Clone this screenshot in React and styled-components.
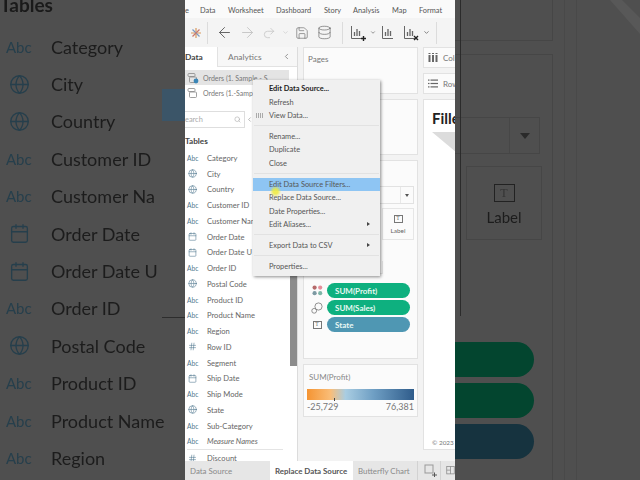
import React from 'react';
import styled, { createGlobalStyle } from 'styled-components';
import { ArrowLeft, ArrowRight, Search, ChevronLeft, Globe, Calendar, Hash, Database, Redo2, Save, ChevronDown } from 'lucide-react';

const GlobalStyle = createGlobalStyle`
  html, body { margin: 0; padding: 0; background: #4f4f4f; }
  * { box-sizing: border-box; }
`;

const Page = styled.div`
  position: relative;
  display: flex;
  width: 640px;
  height: 480px;
  overflow: hidden;
  font-family: "Lato", "Liberation Sans", sans-serif;
  color: #555;
`;

/* dimmed zoomed copy either side of the video */
const LeftBackdrop = styled.aside`
  position: relative;
  width: 185px;
  flex: none;
  background: #4f4f4f;
  filter: blur(0.4px);
`;

const BackdropTitle = styled.div`
  height: 28px;
  font-size: 19px;
  line-height: 10px;
  font-weight: 700;
  color: #1a1a1a;
`;

const BackdropRow = styled.div`
  display: flex;
  align-items: center;
  height: 37.4px;
  font-size: 18px;
  color: #1c1c1c;
  white-space: nowrap;
`;

const BackdropIcon = styled.span`
  display: flex;
  width: 51px;
  flex: none;
  padding-left: ${p => (p.$text ? '6px' : '9px')};
  font-size: 15px;
  color: #263f4c;
`;

const MenuGhost = styled.div`
  position: absolute;
  left: 162px;
  top: 89px;
  width: 23px;
  height: 32px;
  background: #3b5568;
`;

const MenuGhostLine = styled.div`
  position: absolute;
  left: 162px;
  top: 317px;
  width: 23px;
  height: 1px;
  background: #2d2d2d;
`;

const RightBackdrop = styled.aside`
  position: relative;
  display: flex;
  width: 185px;
  flex: none;
  background: #4f4f4f;
  filter: blur(0.4px);
`;

const GhostColumn = styled.div`
  display: flex;
  flex-direction: column;
  width: 98px;
  flex: none;
`;

const GhostCard = styled.div`
  height: ${p => p.$h}px;
  margin-bottom: ${p => p.$gap || 0}px;
  padding-top: ${p => p.$pad || 0}px;
  border-right: 1px solid #464646;
  border-bottom: ${p => (p.$open ? 0 : '1px solid #464646')};
  border-top: ${p => (p.$open ? '1px solid #464646' : 0)};
`;

const GhostSelect = styled.div`
  display: flex;
  justify-content: flex-end;
  width: 85px;
  height: 37px;
  border: 1px solid #464646;
  border-left: 0;
`;

const GhostArrow = styled.div`
  display: flex;
  align-items: center;
  justify-content: center;
  width: 30px;
  border-left: 1px solid #474747;
  &::after {
    content: '';
    border: 5px solid transparent;
    border-top: 6px solid #2a2a2a;
    border-bottom: 0;
  }
`;

const GhostTile = styled.div`
  display: flex;
  flex-direction: column;
  align-items: center;
  gap: 6px;
  width: 76px;
  height: 74px;
  margin: 12px 0 0 11px;
  padding-top: 17px;
  border: 1px solid #464646;
  font-size: 15px;
  color: #1c1c1c;
`;

const GhostT = styled.span`
  display: flex;
  align-items: center;
  justify-content: center;
  width: 21px;
  height: 18px;
  border: 1px solid #222;
  font-family: "Liberation Serif", serif;
  font-size: 12px;
  line-height: 1;
  color: #333;
`;

const GhostPills = styled.div`
  margin-top: 102px;
`;

const GhostPill = styled.div`
  width: 79px;
  height: 35px;
  margin-bottom: 6px;
  border-radius: 0 18px 18px 0;
  background: ${p => p.$color};
`;

const GhostGutter = styled.div`
  width: 12px;
  flex: none;
  border-right: 1px solid #494949;
`;

const GhostEdge = styled.div`
  position: absolute;
  left: 5px;
  top: 0;
  width: 1px;
  height: 316px;
  background: #2b2b2b;
`;

const GhostCorner = styled.svg`
  position: absolute;
  right: 0;
  top: 0;
`;

/* the video itself */
const Video = styled.main`
  display: flex;
  flex-direction: column;
  width: 270px;
  height: 480px;
  flex: none;
  overflow: hidden;
  background: #f3f3f3;
`;

const MenuBar = styled.nav`
  display: flex;
  align-items: center;
  height: 18px;
  flex: none;
  padding-top: 2px;
  background: #fafafa;
  font-size: 7.4px;
  color: #555;
`;

const MenuLabel = styled.span`
  width: ${p => p.$w}px;
  flex: none;
`;

const Toolbar = styled.div`
  display: flex;
  align-items: center;
  height: 29px;
  flex: none;
  background: #f4f4f4;
  color: #666;
`;

const ToolDivider = styled.span`
  width: 1px;
  height: 22px;
  flex: none;
  margin: ${p => p.$m || '0 8px'};
  background: #dcdcdc;
`;

const ToolSlot = styled.span`
  display: flex;
  align-items: center;
  justify-content: center;
  width: ${p => p.$w}px;
  flex: none;
  color: ${p => (p.$faint ? '#c4c4c4' : '#5a5a5a')};
`;

const Body = styled.div`
  display: flex;
  flex: 1;
  min-height: 0;
`;

const DataPane = styled.section`
  display: flex;
  flex-direction: column;
  width: 113px;
  flex: none;
  background: #fff;
  border-right: 1px solid #dcdcdc;
`;

const PaneTabs = styled.div`
  display: flex;
  height: 20px;
  flex: none;
  font-size: 8.4px;
`;

const DataTab = styled.span`
  width: 33px;
  padding-top: 5px;
  font-weight: 700;
  color: #444;
  border-right: 1px solid #e2e2e2;
`;

const AnalyticsTab = styled.span`
  display: flex;
  justify-content: space-between;
  flex: 1;
  padding: 5px 6px 0 10px;
  background: #f7f7f7;
  border-bottom: 1px solid #e2e2e2;
  color: #777;
`;

const Sources = styled.div`
  height: 44px;
  flex: none;
  padding-top: 3px;
`;

const SourceRow = styled.div`
  display: flex;
  align-items: center;
  gap: 4px;
  width: 104px;
  height: 15px;
  padding-left: 2px;
  background: ${p => (p.$active ? '#e4e4e4' : 'transparent')};
  font-size: 7px;
  color: #777;
  white-space: nowrap;
  overflow: hidden;
`;

const SearchRow = styled.div`
  display: flex;
  align-items: center;
  gap: 1px;
  height: 17px;
  flex: none;
  color: #888;
`;

const SearchBox = styled.div`
  display: flex;
  align-items: center;
  justify-content: space-between;
  width: 60px;
  height: 17px;
  padding-right: 3px;
  border: 1px solid #dedede;
  border-left: 0;
  font-size: 7.4px;
  color: #aaa;
`;

const TablesHead = styled.div`
  height: 22px;
  flex: none;
  padding-top: 8px;
  font-size: 8.2px;
  line-height: 10px;
  font-weight: 700;
  color: #444;
`;

const ListArea = styled.div`
  display: flex;
  flex: 1;
  min-height: 0;
  overflow: hidden;
`;

const FieldList = styled.div`
  flex: 1;
  min-width: 0;
`;

const FieldRow = styled.div`
  display: flex;
  align-items: center;
  height: 15.75px;
  font-size: 7.6px;
  font-style: ${p => (p.$italic ? 'italic' : 'normal')};
  color: #666;
  white-space: nowrap;
  overflow: hidden;
`;

const FieldIcon = styled.span`
  display: flex;
  justify-content: ${p => (p.$text ? 'flex-start' : 'center')};
  width: 22px;
  flex: none;
  padding: ${p => (p.$text ? '0 0 0 2px' : '0 8px 0 0')};
  font-size: 6.6px;
  font-style: normal;
  color: #50788e;
`;

const ListRule = styled.div`
  height: 1px;
  margin: 0 6px 0 2px;
  background: #e4e4e4;
`;

const ScrollTrack = styled.div`
  width: 8px;
  flex: none;
  padding-left: 1px;
`;

const ScrollThumb = styled.div`
  width: 7px;
  height: 216px;
  background: #8c8c8c;
`;

const CardsColumn = styled.section`
  display: flex;
  flex-direction: column;
  gap: 5px;
  width: 115px;
  flex: none;
  margin-left: 5px;
`;

const Card = styled.div`
  height: ${p => p.$h}px;
  flex: none;
  padding: ${p => p.$pad || '6px 4px'};
  background: #fbfbfb;
  border: 1px solid #e2e2e2;
  font-size: 8px;
  color: #777;
`;

const MarksSelect = styled.div`
  display: flex;
  justify-content: flex-end;
  height: 18px;
  margin: 25px 3px 0 0;
  border: 1px solid #e2e2e2;
`;

const MarksArrow = styled.span`
  display: flex;
  align-items: center;
  justify-content: center;
  width: 13px;
  border-left: 1px solid #e8e8e8;
  &::after {
    content: '';
    border: 2.5px solid transparent;
    border-top: 3px solid #555;
    border-bottom: 0;
  }
`;

const TileRow = styled.div`
  display: flex;
  justify-content: flex-end;
  margin: 4px 3px 0 0;
`;

const Tile = styled.div`
  display: flex;
  flex-direction: column;
  align-items: center;
  gap: 4px;
  width: 32px;
  height: 32px;
  padding-top: 6px;
  border: 1px solid #e6e6e6;
  font-size: 6.4px;
  color: #666;
`;

const TinyT = styled.span`
  display: flex;
  align-items: center;
  justify-content: center;
  width: 9px;
  height: 8px;
  border: 1px solid #777;
  font-family: "Liberation Serif", serif;
  font-size: 5.5px;
  line-height: 1;
  color: #666;
`;

const HiddenTiles = styled.div`
  display: flex;
  gap: 5px;
  height: 13px;
  margin: 21px 0 0 3px;
`;

const HiddenTile = styled.span`
  width: 34px;
  border: 1px solid #e6e6e6;
  border-top: 0;
`;

const Pills = styled.div`
  display: flex;
  flex-direction: column;
  gap: 2px;
  margin-top: 9px;
`;

const PillRow = styled.div`
  display: flex;
  align-items: center;
`;

const PillIcon = styled.span`
  display: flex;
  align-items: center;
  justify-content: center;
  width: 20px;
  flex: none;
`;

const Pill = styled.span`
  display: flex;
  align-items: center;
  width: 83px;
  height: 15px;
  padding-left: 8px;
  border-radius: 8px;
  background: ${p => p.$color};
  font-size: 8px;
  font-weight: 700;
  color: #e9f8f3;
`;

const LegendTitle = styled.div`
  padding: 4px 0 0 2px;
  font-size: 8px;
  color: #888;
`;

const LegendBar = styled.div`
  position: relative;
  height: 11px;
  margin-top: 7px;
  background: linear-gradient(90deg, #f59432 0%, #f9bd78 22%, #a9cde2 36%, #6f9fc4 62%, #2f5c8b 100%);
`;

const LegendTick = styled.span`
  position: absolute;
  left: 27px;
  bottom: -1px;
  width: 1px;
  height: 3px;
  background: #444;
`;

const LegendScale = styled.div`
  display: flex;
  justify-content: space-between;
  margin-top: 2px;
  font-size: 9px;
  line-height: 10px;
  color: #777;
`;

const ViewColumn = styled.section`
  display: flex;
  flex-direction: column;
  gap: 5px;
  flex: 1;
  min-width: 0;
  margin-left: 5px;
`;

const Shelf = styled.div`
  display: flex;
  align-items: center;
  gap: 5px;
  height: 21px;
  flex: none;
  padding-left: 4px;
  background: #fbfbfb;
  border: 1px solid #e2e2e2;
  border-right: 0;
  font-size: 8px;
  color: #777;
  white-space: nowrap;
  overflow: hidden;
  svg { flex: none; }
`;

const ViewCard = styled.div`
  display: flex;
  flex-direction: column;
  height: 351px;
  flex: none;
  padding: 8px 0 0 8px;
  background: #fff;
  border: 1px solid #e2e2e2;
  border-right: 0;
  overflow: hidden;
`;

const ViewTitle = styled.div`
  margin-bottom: 4px;
  font-size: 15px;
  line-height: 20px;
  font-weight: 700;
  color: #222;
  white-space: nowrap;
`;

const ViewFooter = styled.div`
  margin-top: auto;
  padding-bottom: 3px;
  font-size: 6.4px;
  color: #777;
  white-space: nowrap;
`;

const SheetTabs = styled.footer`
  display: flex;
  align-items: stretch;
  height: 19px;
  flex: none;
  background: #e6e6e6;
  font-size: 7.9px;
  color: #888;
`;

const SheetTab = styled.span`
  display: flex;
  align-items: center;
  width: ${p => p.$w}px;
  flex: none;
  padding-left: ${p => p.$pl || 5}px;
  border-right: ${p => (p.$rule ? '1px solid #d2d2d2' : 0)};
  background: ${p => (p.$active ? '#fff' : 'transparent')};
  font-weight: ${p => (p.$active ? 700 : 400)};
  color: ${p => (p.$active ? '#555' : '#8a8a8a')};
  white-space: nowrap;
  overflow: hidden;
`;

/* context menu over the panes */
const ContextMenu = styled.ul`
  position: absolute;
  left: 253px;
  top: 80px;
  width: 127px;
  height: 196px;
  margin: 0;
  padding: 2px 0 0;
  list-style: none;
  background: #f0f0f0;
  box-shadow: 1px 1px 3px rgba(0, 0, 0, 0.45);
  font-size: 7.4px;
  color: #555;
`;

const MenuItem = styled.li`
  position: relative;
  display: flex;
  align-items: center;
  justify-content: space-between;
  height: 13.4px;
  padding: 0 10px 0 16px;
  background: ${p => (p.$active ? '#8ec5f3' : 'transparent')};
  font-weight: ${p => (p.$bold ? 700 : 400)};
  color: ${p => (p.$bold ? '#222' : '#555')};
  &::after {
    content: ${p => (p.$sub ? "''" : 'none')};
    border: 2px solid transparent;
    border-left: 3px solid #444;
    border-right: 0;
  }
`;

const MenuGlyph = styled.svg`
  position: absolute;
  left: 3px;
  top: 3px;
`;

const MenuRule = styled.li`
  height: 1px;
  margin: ${p => p.$m || '3.3px'} 1px;
  background: #e2e2e2;
`;

const CursorGlow = styled.span`
  position: absolute;
  left: 270px;
  top: 186px;
  width: 11px;
  height: 11px;
  border-radius: 50%;
  background: radial-gradient(circle, rgba(240, 235, 60, 0.85) 30%, rgba(240, 235, 60, 0) 75%);
`;

const FIELDS = [
  ['abc', 'Category'], ['geo', 'City'], ['geo', 'Country'], ['abc', 'Customer ID'],
  ['abc', 'Customer Name'], ['date', 'Order Date'], ['date', 'Order Date U'], ['abc', 'Order ID'],
  ['geo', 'Postal Code'], ['abc', 'Product ID'], ['abc', 'Product Name'], ['abc', 'Region'],
  ['num', 'Row ID'], ['abc', 'Segment'], ['date', 'Ship Date'], ['abc', 'Ship Mode'],
  ['geo', 'State'], ['abc', 'Sub-Category'],
];

const BACKDROP_FIELDS = [
  ['abc', 'Category'], ['geo', 'City'], ['geo', 'Country'], ['abc', 'Customer ID'],
  ['abc', 'Customer Na'], ['date', 'Order Date'], ['date', 'Order Date U'], ['abc', 'Order ID'],
  ['geo', 'Postal Code'], ['abc', 'Product ID'], ['abc', 'Product Name'], ['abc', 'Region'],
];

const TypeGlyph = ({ type, size }) => {
  if (type === 'abc') return 'Abc';
  const Icon = { geo: Globe, date: Calendar, num: Hash }[type];
  return <Icon size={size} strokeWidth={1.5} />;
};

const TableauMark = () => (
  <svg width="12" height="12" viewBox="0 0 12 12" fill="none" strokeWidth="1.2">
    <path d="M6 1v10M1 6h10" stroke="#d99a5c" />
    <path d="M2.5 2.5l7 7" stroke="#7d9ac0" />
    <path d="M9.5 2.5l-7 7" stroke="#c9786e" />
  </svg>
);

const ChartIcon = ({ badge }) => (
  <svg width="18" height="18" viewBox="0 0 18 18" fill="none" stroke="#666" strokeWidth="1">
    <path d="M2.5 2v12.5H13" />
    <path d="M5.5 12V8M8 12V5M10.5 12V7" strokeWidth="1.3" />
    {badge === 'plus' && <path d="M12 14.5h5M14.5 12v5" stroke="#222" strokeWidth="1.4" />}
    {badge === 'x' && <path d="M12 12l4 4M16 12l-4 4" stroke="#222" strokeWidth="1.4" />}
  </svg>
);

const SourceIcon = ({ check }) => (
  <svg width="12" height="12" viewBox="0 0 12 12" fill="none" stroke="#888" strokeWidth="0.8">
    <rect x="1" y="1.5" width="7" height="3" rx="1" />
    <rect x="2.5" y="5" width="7" height="5.5" rx="1" />
    {check && <circle cx="9" cy="9" r="2.4" fill="#3a86b7" stroke="none" />}
  </svg>
);

const ColumnsGlyph = () => (
  <svg width="10" height="9" viewBox="0 0 10 9" fill="#666">
    <rect x="0.5" y="2" width="2" height="7" />
    <rect x="4" y="2" width="2" height="7" />
    <rect x="7.5" y="2" width="2" height="7" />
    <rect x="0.5" y="0" width="2" height="1" />
    <rect x="4" y="0" width="2" height="1" />
    <rect x="7.5" y="0" width="2" height="1" />
  </svg>
);

const RowsGlyph = () => (
  <svg width="10" height="9" viewBox="0 0 10 9" fill="#666">
    <rect x="0" y="0.5" width="1.5" height="1.2" />
    <rect x="2.5" y="0.5" width="7.5" height="1.2" />
    <rect x="0" y="3.9" width="1.5" height="1.2" />
    <rect x="2.5" y="3.9" width="7.5" height="1.2" />
    <rect x="0" y="7.3" width="1.5" height="1.2" />
    <rect x="2.5" y="7.3" width="7.5" height="1.2" />
  </svg>
);

const ColorDots = () => (
  <svg width="11" height="11" viewBox="0 0 11 11">
    <circle cx="2.6" cy="2.6" r="2.1" fill="#b56a6a" />
    <circle cx="8.2" cy="2.6" r="2.1" fill="#e58f9b" />
    <circle cx="2.6" cy="8.2" r="2.1" fill="#7d9aa3" />
    <circle cx="8.2" cy="8.2" r="2.1" fill="#7fb6a8" />
  </svg>
);

const SizeGlyph = () => (
  <svg width="12" height="12" viewBox="0 0 12 12" fill="none" stroke="#777" strokeWidth="0.8">
    <circle cx="7.5" cy="4.5" r="3.6" />
    <circle cx="3.2" cy="8.8" r="2.4" />
  </svg>
);

const GridAdd = () => (
  <svg width="13" height="13" viewBox="0 0 13 13" fill="none" stroke="#999" strokeWidth="1">
    <rect x="1" y="1" width="8" height="8" />
    <path d="M8 11h5M10.5 8.5v5" stroke="#555" />
  </svg>
);

const DashAdd = () => (
  <svg width="12" height="13" viewBox="0 0 12 13" fill="none" stroke="#888" strokeWidth="1">
    <rect x="1" y="1" width="10" height="10" />
    <path d="M6 1v10M1 6h5" />
  </svg>
);

const App = () => (
  <Page>
    <GlobalStyle />

    <LeftBackdrop>
      <BackdropTitle>Tables</BackdropTitle>
      {BACKDROP_FIELDS.map(([type, name]) => (
        <BackdropRow key={name}>
          <BackdropIcon $text={type === 'abc'}>
            <TypeGlyph type={type} size={21} />
          </BackdropIcon>
          {name}
        </BackdropRow>
      ))}
      <MenuGhost />
      <MenuGhostLine />
    </LeftBackdrop>

    <Video>
      <MenuBar>
        <MenuLabel $w={15}>e</MenuLabel>
        <MenuLabel $w={28}>Data</MenuLabel>
        <MenuLabel $w={48}>Worksheet</MenuLabel>
        <MenuLabel $w={48}>Dashboard</MenuLabel>
        <MenuLabel $w={29}>Story</MenuLabel>
        <MenuLabel $w={39}>Analysis</MenuLabel>
        <MenuLabel $w={27}>Map</MenuLabel>
        <MenuLabel $w={26}>Format</MenuLabel>
      </MenuBar>

      <Toolbar>
        <ToolSlot $w={22}><TableauMark /></ToolSlot>
        <ToolDivider $m="0 8px 0 0" />
        <ToolSlot $w={17}><ArrowLeft size={17} strokeWidth={1.3} /></ToolSlot>
        <ToolSlot $w={28} $faint><ArrowRight size={17} strokeWidth={1.3} /></ToolSlot>
        <ToolSlot $w={16} $faint><Redo2 size={14} strokeWidth={1.3} /></ToolSlot>
        <ToolSlot $w={16} $faint><ChevronDown size={7} strokeWidth={2} /></ToolSlot>
        <ToolSlot $w={18}><Save size={14} strokeWidth={1} /></ToolSlot>
        <ToolSlot $w={26}><Database size={15} strokeWidth={1} /></ToolSlot>
        <ToolDivider $m="0 3px 0 5px" />
        <ToolSlot $w={24}><ChartIcon badge="plus" /></ToolSlot>
        <ToolSlot $w={6}><ChevronDown size={7} strokeWidth={2.5} /></ToolSlot>
        <ToolSlot $w={25}><ChartIcon /></ToolSlot>
        <ToolSlot $w={19}><ChartIcon badge="x" /></ToolSlot>
        <ToolSlot $w={13}><ChevronDown size={7} strokeWidth={2.5} /></ToolSlot>
        <ToolDivider $m="0 0 0 3px" />
      </Toolbar>

      <Body>
        <DataPane>
          <PaneTabs>
            <DataTab>Data</DataTab>
            <AnalyticsTab>
              Analytics
              <ChevronLeft size={9} />
            </AnalyticsTab>
          </PaneTabs>
          <Sources>
            <SourceRow $active><SourceIcon check /> Orders (1. Sample - S</SourceRow>
            <SourceRow><SourceIcon /> Orders (1.-Sample - S</SourceRow>
          </Sources>
          <SearchRow>
            <SearchBox>
              earch
              <Search size={7} />
            </SearchBox>
            <ChevronLeft size={7} />
          </SearchRow>
          <TablesHead>Tables</TablesHead>
          <ListArea>
            <FieldList>
              {FIELDS.map(([type, name]) => (
                <FieldRow key={name}>
                  <FieldIcon $text={type === 'abc'}><TypeGlyph type={type} size={9} /></FieldIcon>
                  {name}
                </FieldRow>
              ))}
              <FieldRow $italic>
                <FieldIcon $text>Abc</FieldIcon>
                Measure Names
              </FieldRow>
              <ListRule />
              <FieldRow>
                <FieldIcon><TypeGlyph type="num" size={9} /></FieldIcon>
                Discount
              </FieldRow>
            </FieldList>
            <ScrollTrack>
              <ScrollThumb />
            </ScrollTrack>
          </ListArea>
        </DataPane>

        <CardsColumn>
          <Card $h={47}>Pages</Card>
          <Card $h={56} />
          <Card $h={199} $pad="0 0 0 3px">
            <MarksSelect><MarksArrow /></MarksSelect>
            <TileRow>
              <Tile>
                <TinyT>T</TinyT>
                Label
              </Tile>
            </TileRow>
            <HiddenTiles>
              <HiddenTile />
              <HiddenTile />
            </HiddenTiles>
            <Pills>
              <PillRow>
                <PillIcon><ColorDots /></PillIcon>
                <Pill $color="#0eb07f">SUM(Profit)</Pill>
              </PillRow>
              <PillRow>
                <PillIcon><SizeGlyph /></PillIcon>
                <Pill $color="#0eb07f">SUM(Sales)</Pill>
              </PillRow>
              <PillRow>
                <PillIcon><TinyT>T</TinyT></PillIcon>
                <Pill $color="#4f97b3">State</Pill>
              </PillRow>
            </Pills>
          </Card>
          <Card $h={53} $pad="3px 3px 0">
            <LegendTitle>SUM(Profit)</LegendTitle>
            <LegendBar><LegendTick /></LegendBar>
            <LegendScale>
              <span>-25,729</span>
              <span>76,381</span>
            </LegendScale>
          </Card>
        </CardsColumn>

        <ViewColumn>
          <Shelf><ColumnsGlyph /> Columns</Shelf>
          <Shelf><RowsGlyph /> Rows</Shelf>
          <ViewCard>
            <ViewTitle>Filled Map</ViewTitle>
            <svg width="24" height="20" viewBox="0 0 24 20">
              <path d="M0 0h24v20z" fill="#dcdcdc" />
            </svg>
            <ViewFooter>© 2023 Mapbox</ViewFooter>
          </ViewCard>
        </ViewColumn>
      </Body>

      <SheetTabs>
        <SheetTab $w={85}>Data Source</SheetTab>
        <SheetTab $w={83} $active>Replace Data Source</SheetTab>
        <SheetTab $w={65} $rule>Butterfly Chart</SheetTab>
        <SheetTab $w={23} $pl={6} $rule><GridAdd /></SheetTab>
        <SheetTab $w={14} $pl={5}><DashAdd /></SheetTab>
      </SheetTabs>
    </Video>

    <RightBackdrop>
      <GhostColumn>
        <GhostCard $h={41} $gap={13} />
        <GhostCard $open $h={426} $pad={62}>
          <GhostSelect><GhostArrow /></GhostSelect>
          <GhostTile>
            <GhostT>T</GhostT>
            Label
          </GhostTile>
          <GhostPills>
            <GhostPill $color="#03452f" />
            <GhostPill $color="#03452f" />
            <GhostPill $color="#16333f" />
          </GhostPills>
        </GhostCard>
      </GhostColumn>
      <GhostGutter />
      <GhostGutter />
      <GhostEdge />
      <GhostCorner width="30" height="34" viewBox="0 0 30 34">
        <path d="M0 0h12l18 18v16z" fill="#585858" />
      </GhostCorner>
    </RightBackdrop>

    <ContextMenu>
      <MenuItem $bold>Edit Data Source...</MenuItem>
      <MenuItem>Refresh</MenuItem>
      <MenuItem>
        <MenuGlyph width="7" height="7" viewBox="0 0 7 7" fill="#aaa">
          <rect x="0" y="1" width="1" height="5" />
          <rect x="2" y="1" width="1" height="5" />
          <rect x="4" y="1" width="1" height="5" />
          <rect x="6" y="1" width="1" height="5" />
        </MenuGlyph>
        View Data...
      </MenuItem>
      <MenuRule />
      <MenuItem>Rename...</MenuItem>
      <MenuItem>Duplicate</MenuItem>
      <MenuItem>Close</MenuItem>
      <MenuRule />
      <MenuItem $active>Edit Data Source Filters...</MenuItem>
      <MenuItem>Replace Data Source...</MenuItem>
      <MenuItem>Date Properties...</MenuItem>
      <MenuItem $sub>Edit Aliases...</MenuItem>
      <MenuRule />
      <MenuItem $sub>Export Data to CSV</MenuItem>
      <MenuRule />
      <MenuItem>Properties...</MenuItem>
    </ContextMenu>
    <CursorGlow />
  </Page>
);

export default App;
